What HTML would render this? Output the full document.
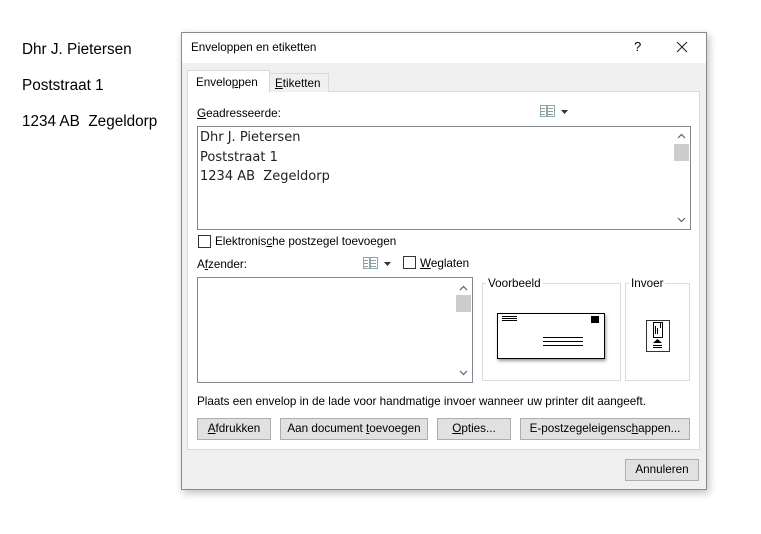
<!DOCTYPE html>
<html><head><style>
*{margin:0;padding:0;box-sizing:border-box}
body{width:761px;height:534px;background:#fff;font-family:"Liberation Sans",sans-serif;position:relative;overflow:hidden;color:#000}
.a{position:absolute}
.t{font-size:11.7px;white-space:nowrap}
.btn{position:absolute;background:#e1e1e1;border:1px solid #adadad;font-size:11.7px;text-align:center;line-height:20px;height:22px}
.chev{position:absolute;font-size:9px;color:#606060}
</style></head><body>
<div class="a" style="left:22px;top:41px;font-size:15.3px">Dhr J. Pietersen</div>
<div class="a" style="left:22px;top:77px;font-size:15.3px">Poststraat 1</div>
<div class="a" style="left:22px;top:113px;font-size:15.3px">1234 AB&nbsp; Zegeldorp</div>

<div class="a" style="left:181px;top:32px;width:526px;height:458px;background:#f0f0f0;border:1px solid #8a8a8a;box-shadow:2px 3px 8px rgba(0,0,0,.25)"></div>
<div class="a" style="left:182px;top:33px;width:524px;height:30px;background:#fff"></div>
<div class="a t" style="left:191px;top:41px">Enveloppen en etiketten</div>
<div class="a" style="left:634px;top:39px;font-size:13px">?</div>
<svg class="a" style="left:676px;top:41px" width="12" height="12"><path d="M1 1l10 10M11 1L1 11" stroke="#222" stroke-width="1.1"/></svg>

<div class="a" style="left:187px;top:91px;width:513px;height:359px;background:#fff;border:1px solid #dadada"></div>
<div class="a" style="left:269px;top:73px;width:60px;height:19px;background:#f0f0f0;border:1px solid #dadada;border-bottom:none"></div>
<div class="a t" style="left:275px;top:77px"><u>E</u>tiketten</div>
<div class="a" style="left:187px;top:70px;width:83px;height:23px;background:#fff;border:1px solid #dadada;border-bottom:none"></div>
<div class="a t" style="left:196px;top:76px">Envelo<u>p</u>pen</div>

<div class="a t" style="left:197px;top:107px"><u>G</u>eadresseerde:</div>
<svg class="a" style="left:539px;top:104px" width="32" height="14"><rect x="1.5" y="1.5" width="6" height="11" fill="none" stroke="#8aa"/><rect x="8.5" y="1.5" width="7" height="11" fill="none" stroke="#8aa"/><path d="M2 4.5h4M2 7.5h4M2 10.5h4M9 4.5h5M9 7.5h5M9 10.5h5" stroke="#999"/><path d="M22 6h7l-3.5 4z" fill="#333"/></svg>
<div class="a" style="left:197px;top:126px;width:494px;height:104px;background:#fff;border:1px solid #828790"></div>
<div class="a" style="left:200px;top:128px;line-height:19.5px;color:#222;font-family:'DejaVu Sans',sans-serif;font-size:13px">Dhr J. Pietersen<br>Poststraat 1<br>1234 AB&nbsp; Zegeldorp</div>
<svg class="a" style="left:677px;top:133px" width="9" height="6"><path d="M1 5l3.5-3.5L8 5" fill="none" stroke="#606060" stroke-width="1.2"/></svg>
<div class="a" style="left:674px;top:144px;width:15px;height:17px;background:#cdcdcd"></div>
<svg class="a" style="left:677px;top:217px" width="9" height="6"><path d="M1 1l3.5 3.5L8 1" fill="none" stroke="#606060" stroke-width="1.2"/></svg>

<div class="a" style="left:198px;top:235px;width:13px;height:13px;border:1px solid #333;background:#fff"></div>
<div class="a t" style="left:215px;top:235px">Elektronis<u>c</u>he postzegel toevoegen</div>

<div class="a t" style="left:197px;top:258px">A<u>f</u>zender:</div>
<svg class="a" style="left:362px;top:256px" width="32" height="14"><rect x="1.5" y="1.5" width="6" height="11" fill="none" stroke="#8aa"/><rect x="8.5" y="1.5" width="7" height="11" fill="none" stroke="#8aa"/><path d="M2 4.5h4M2 7.5h4M2 10.5h4M9 4.5h5M9 7.5h5M9 10.5h5" stroke="#999"/><path d="M22 6h7l-3.5 4z" fill="#333"/></svg>
<div class="a" style="left:403px;top:256px;width:13px;height:13px;border:1px solid #333;background:#fff"></div>
<div class="a t" style="left:420px;top:257px"><u>W</u>eglaten</div>

<div class="a" style="left:197px;top:277px;width:276px;height:106px;background:#fff;border:1px solid #828790"></div>
<svg class="a" style="left:459px;top:285px" width="9" height="6"><path d="M1 5l3.5-3.5L8 5" fill="none" stroke="#606060" stroke-width="1.2"/></svg>
<div class="a" style="left:456px;top:295px;width:15px;height:17px;background:#cdcdcd"></div>
<svg class="a" style="left:459px;top:370px" width="9" height="6"><path d="M1 1l3.5 3.5L8 1" fill="none" stroke="#606060" stroke-width="1.2"/></svg>

<div class="a" style="left:482px;top:283px;width:139px;height:98px;border:1px solid #dcdcdc"></div>
<div class="a t" style="left:486px;top:277px;background:#fff;padding:0 2px">Voorbeeld</div>
<div class="a" style="left:497px;top:313px;width:108px;height:46px;border:1px solid #000;box-shadow:1px 2px 3px rgba(0,0,0,.4);background:#fff"></div>
<svg class="a" style="left:497px;top:313px" width="108" height="46"><path d="M5 3.5h15M5 5.5h15M5 7.5h15M46 24.5h40M46 28.5h40M46 32.5h40" stroke="#000" stroke-width="1"/><rect x="94" y="3" width="8" height="7" fill="#000"/></svg>

<div class="a" style="left:625px;top:283px;width:65px;height:98px;border:1px solid #dcdcdc"></div>
<div class="a t" style="left:629px;top:277px;background:#fff;padding:0 2px">Invoer</div>
<svg class="a" style="left:645px;top:319px" width="26" height="34"><rect x="1.5" y="1.5" width="23" height="31" fill="#fff" stroke="#333"/><rect x="8.5" y="3.5" width="9" height="15" fill="none" stroke="#000"/><path d="M10.5 7v8M12.5 9v6M15.5 3v6" stroke="#000"/><path d="M8 24h9l-4.5-4z" fill="#000"/><path d="M8 26.5h9M8 28.5h9" stroke="#000"/></svg>

<div class="a t" style="left:197px;top:395px">Plaats een envelop in de lade voor handmatige invoer wanneer uw printer dit aangeeft.</div>
<div class="btn" style="left:197px;top:418px;width:74px"><u>A</u>fdrukken</div>
<div class="btn" style="left:280px;top:418px;width:148px">Aan document <u>t</u>oevoegen</div>
<div class="btn" style="left:437px;top:418px;width:74px"><u>O</u>pties...</div>
<div class="btn" style="left:520px;top:418px;width:170px">E-postzegeleigensc<u>h</u>appen...</div>
<div class="btn" style="left:625px;top:459px;width:74px">Annuleren</div>
</body></html>
